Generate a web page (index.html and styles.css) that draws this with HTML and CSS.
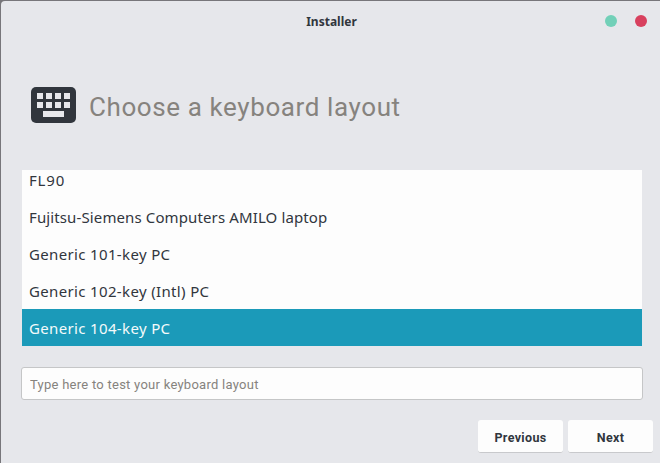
FILE: index.html
```html
<!DOCTYPE html>
<html lang="en">
<head>
    <meta charset="utf-8">
    <title>Installer</title>
    <link rel="stylesheet" href="styles.css">
</head>
<body>

<div class="window">
    <header class="titlebar">
        <h1 class="title">Installer</h1>
        <div class="controls">
            <span class="dot minimize"></span>
            <span class="dot close"></span>
        </div>
    </header>

    <div class="heading">
        <svg class="icon" width="45" height="36" viewBox="0 0 45 36">
            <rect width="45" height="36" rx="5" fill="#31363d"/>
            <path fill="#e7e8ec" d="M6 6h6v6H6zM15 6h6v6h-6zM24 6h6v6h-6zM33 6h6v6h-6zM6 15h6v6H6zM15 15h6v6h-6zM24 15h6v6h-6zM33 15h6v6h-6zM12 24h21v6H12z"/>
        </svg>
        <h2 class="heading-text">Choose a keyboard layout</h2>
    </div>

    <ul class="list">
        <li class="short">FL90</li>
        <li class="long">Fujitsu-Siemens Computers AMILO laptop</li>
        <li>Generic 101-key PC</li>
        <li>Generic 102-key (Intl) PC</li>
        <li class="selected">Generic 104-key PC</li>
    </ul>

    <input class="test" type="text" placeholder="Type here to test your keyboard layout">

    <div class="buttons">
        <button type="button">Previous</button>
        <button type="button">Next</button>
    </div>
</div>

</body>
</html>
```
FILE: styles.css
```css
* { box-sizing: border-box; }

body {
    margin: 0;
    padding: 1px 0 0 1px;
    height: 463px;
    overflow: hidden;
    background: #77767a;
    color: #31363d;
    font-family: "Noto Sans", sans-serif;
}

.window {
    display: flex;
    flex-direction: column;
    height: 462px;
    background: #e6e7eb;
    border-top-left-radius: 4px;
}

.titlebar {
    display: grid;
    grid-template-columns: 100px 1fr 100px;
    align-items: center;
    height: 40px;
    padding: 0 13px;
}

.title {
    grid-column: 2;
    margin: 0;
    padding: 2px 0 0 2px;
    font-size: 12px;
    line-height: 18px;
    text-align: center;
}

.controls {
    display: flex;
    justify-content: flex-end;
    gap: 18px;
}

.dot {
    width: 12px;
    height: 12px;
    border-radius: 50%;
}

.minimize { background: #72d0b8; }

.close { background: #d8405e; }

.heading {
    display: flex;
    align-items: center;
    gap: 13px;
    height: 36px;
    margin: 46px 0 0 30px;
}

.heading-text {
    margin: 4px 0 0;
    color: #86837e;
    font-family: Roboto, sans-serif;
    font-size: 26px;
    font-weight: 400;
    letter-spacing: 0.6px;
    line-height: 34px;
    white-space: nowrap;
}

.list {
    display: flex;
    flex-direction: column;
    justify-content: flex-end;
    height: 176px;
    margin: 47px 18px 0 21px;
    padding: 0;
    overflow: hidden;
    background: #fdfdfd;
    font-size: 15px;
    letter-spacing: 0.35px;
    line-height: 37px;
    list-style: none;
}

.list li {
    flex: none;
    height: 37px;
    padding: 1px 0 0 7px;
}

.list .short { letter-spacing: 0.8px; }

.list .long { letter-spacing: 0.12px; }

.list .selected {
    background: #1b9ab9;
    color: #f5fafb;
}

.test {
    height: 33px;
    margin: 21px 17px 0 20px;
    padding: 2px 8px 0;
    border: 1px solid #c5c6c7;
    border-radius: 3px;
    background: #fdfdfd;
    color: #31363d;
    font: 13px Roboto, sans-serif;
    letter-spacing: 0.26px;
}

.test::placeholder { color: #86837e; }

.buttons {
    display: flex;
    justify-content: flex-end;
    gap: 5px;
    margin: 20px 7px 0 0;
}

button {
    width: 85px;
    height: 33px;
    padding: 2px 0 0;
    border: 0;
    border-bottom: 1px solid #c8c9cc;
    border-radius: 3px;
    background: #fdfdfd;
    color: #31363d;
    font: bold 12.5px Roboto, sans-serif;
    letter-spacing: 0.35px;
}
```
